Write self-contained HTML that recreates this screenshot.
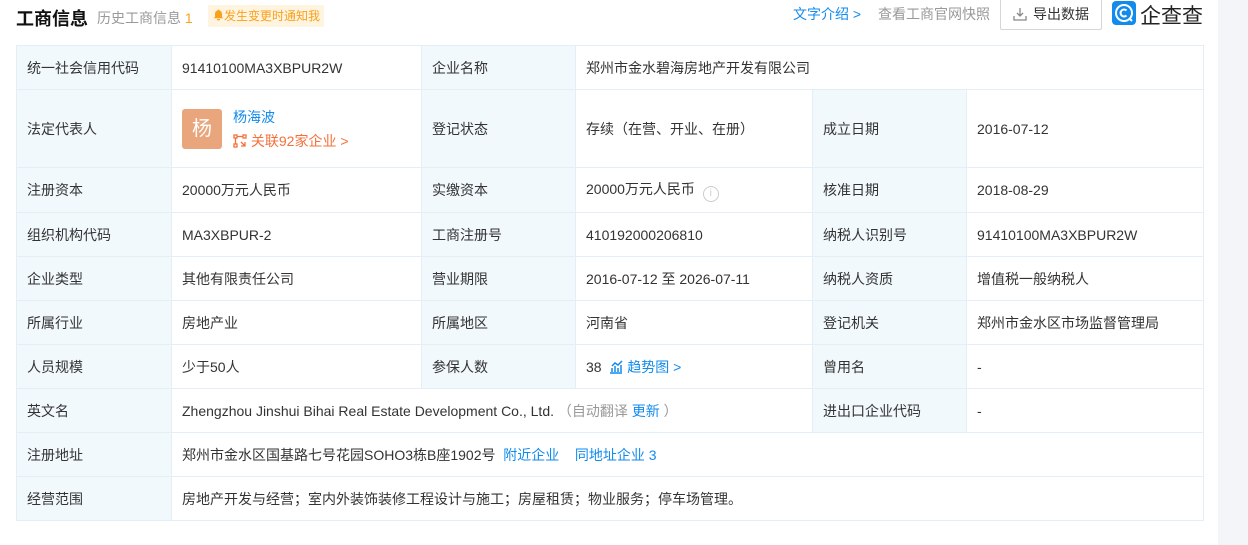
<!DOCTYPE html>
<html><head><meta charset="utf-8"><style>
body{margin:0;width:1248px;height:545px;background:#fff;font-family:"Liberation Sans","Noto Sans CJK SC",sans-serif;color:#333;font-size:14px;position:relative;overflow:hidden}
.strip{position:absolute;left:1218px;top:0;width:30px;height:545px;background:#f4f5f8}
.hd{position:absolute;top:0;left:0;width:1218px;height:40px}
.t1{position:absolute;left:16px;top:5px;font-size:18px;font-weight:bold;color:#111}
.t2{position:absolute;left:97px;top:8px;font-size:14px;color:#999}
.t2 b{color:#f9a11b;font-weight:normal}
.nt{position:absolute;left:208px;top:5px;height:22px;line-height:22px;padding:0 4px 0 5px;background:#fff4e0;color:#f9a11b;font-size:12px;border-radius:2px}
.a1{position:absolute;left:793px;top:4px;color:#128bed}
.a2{position:absolute;left:878px;top:4px;color:#999}
.btn{position:absolute;left:1000px;top:-2px;width:102px;height:32px;border:1px solid #d6d6d6;border-radius:2px;line-height:30px;box-sizing:border-box;padding-left:32px;color:#333}
.logo{position:absolute;left:1112px;top:1px;width:24px;height:24px;background:#128bed;border-radius:4px}
.lt{position:absolute;left:1140px;top:0px;font-size:21px;color:#222;letter-spacing:0}
table{position:absolute;left:16px;top:45px;border-collapse:collapse;table-layout:fixed;width:1187px}
td{border:1px solid #e4eef6;padding:0 10px;font-size:14px;white-space:nowrap;overflow:hidden}
td.l{background:#f2f9fc;color:#333}
.bl{color:#128bed}
.gr{color:#999}
</style></head><body>
<div class="strip"></div>
<div class="hd">
<div class="t1">工商信息</div>
<div class="t2">历史工商信息 <b>1</b></div>
<div class="nt"><svg width="11" height="12" viewBox="0 0 11 12" style="vertical-align:-1px"><path d="M5.5 0.5a1 1 0 0 1 1 1 3.5 3.5 0 0 1 2.5 3.4V8l1.3 1.3H0.7L2 8V4.9A3.5 3.5 0 0 1 4.5 1.5a1 1 0 0 1 1-1zM4 10h3a1.5 1.5 0 0 1-3 0z" fill="#f9a11b"/></svg>发生变更时通知我</div>
<div class="a1">文字介绍 &gt;</div>
<div class="a2">查看工商官网快照</div>
<div class="btn"><svg style="position:absolute;left:12px;top:8px" width="14" height="14" viewBox="0 0 14 14" fill="none" stroke="#888" stroke-width="1.3"><path d="M7 1v8M4 6l3 3 3-3M1 9v4h12V9"/></svg>导出数据</div>
<div class="logo"><svg width="24" height="24" viewBox="0 0 24 24" fill="none" stroke="#fff" stroke-width="2"><circle cx="12" cy="12" r="8"/><path d="M14.5 9.5a3.5 3.5 0 1 0 0 5"/><path d="M17 17l3 3"/></svg></div>
<div class="lt">企查查</div>
</div>
<table>
<colgroup><col style="width:155px"><col style="width:250px"><col style="width:154px"><col style="width:237px"><col style="width:154px"><col style="width:237px"></colgroup>
<tr style="height:44px"><td class="l">统一社会信用代码</td><td>91410100MA3XBPUR2W</td><td class="l">企业名称</td><td colspan="3">郑州市金水碧海房地产开发有限公司</td></tr>
<tr style="height:78px"><td class="l">法定代表人</td><td><div style="position:relative;height:60px"><div style="position:absolute;left:0;top:10px;width:40px;height:40px;background:#e9a67c;border-radius:3px;color:#fff;font-size:20px;text-align:center;line-height:40px">杨</div><div class="bl" style="position:absolute;left:51px;top:8px">杨海波</div><div style="position:absolute;left:51px;top:32px;color:#f4703a"><svg width="14" height="14" viewBox="0 0 14 14" fill="none" stroke="#f4703a" stroke-width="1.3" style="vertical-align:-2px"><rect x="1" y="1" width="3" height="3"/><rect x="10" y="1" width="3" height="3"/><rect x="1" y="10" width="3" height="3"/><path d="M4 2.5h6M2.5 4v6M8 8l4 4M12 8v4H8"/></svg> 关联92家企业 &gt;</div></div></td><td class="l">登记状态</td><td>存续（在营、开业、在册）</td><td class="l">成立日期</td><td>2016-07-12</td></tr>
<tr style="height:45px"><td class="l">注册资本</td><td>20000万元人民币</td><td class="l">实缴资本</td><td>20000万元人民币 &nbsp;<span style="display:inline-block;width:14px;height:14px;border:1px solid #ccc;border-radius:50%;color:#ccc;font-size:10px;text-align:center;line-height:14px;vertical-align:-2px">i</span></td><td class="l">核准日期</td><td>2018-08-29</td></tr>
<tr style="height:44px"><td class="l">组织机构代码</td><td>MA3XBPUR-2</td><td class="l">工商注册号</td><td>410192000206810</td><td class="l">纳税人识别号</td><td>91410100MA3XBPUR2W</td></tr>
<tr style="height:44px"><td class="l">企业类型</td><td>其他有限责任公司</td><td class="l">营业期限</td><td>2016-07-12 至 2026-07-11</td><td class="l">纳税人资质</td><td>增值税一般纳税人</td></tr>
<tr style="height:44px"><td class="l">所属行业</td><td>房地产业</td><td class="l">所属地区</td><td>河南省</td><td class="l">登记机关</td><td>郑州市金水区市场监督管理局</td></tr>
<tr style="height:44px"><td class="l">人员规模</td><td>少于50人</td><td class="l">参保人数</td><td>38 &nbsp;<span class="bl"><svg width="14" height="14" viewBox="0 0 14 14" fill="none" stroke="#128bed" stroke-width="1.5" style="vertical-align:-2px"><path d="M1 13h12M3 12V8M6 12V6M9 12V8M12 12V5M3 6l3-3 3 2 4-4"/></svg> 趋势图 &gt;</span></td><td class="l">曾用名</td><td>-</td></tr>
<tr style="height:44px"><td class="l">英文名</td><td colspan="3">Zhengzhou Jinshui Bihai Real Estate Development Co., Ltd. <span class="gr">（自动翻译 <span class="bl">更新</span> ）</span></td><td class="l">进出口企业代码</td><td>-</td></tr>
<tr style="height:44px"><td class="l">注册地址</td><td colspan="5">郑州市金水区国基路七号花园SOHO3栋B座1902号 &nbsp;<span class="bl">附近企业</span> &nbsp;&nbsp;&nbsp;<span class="bl">同地址企业 3</span></td></tr>
<tr style="height:44px"><td class="l">经营范围</td><td colspan="5">房地产开发与经营；室内外装饰装修工程设计与施工；房屋租赁；物业服务；停车场管理。</td></tr>
</table>
</body></html>
